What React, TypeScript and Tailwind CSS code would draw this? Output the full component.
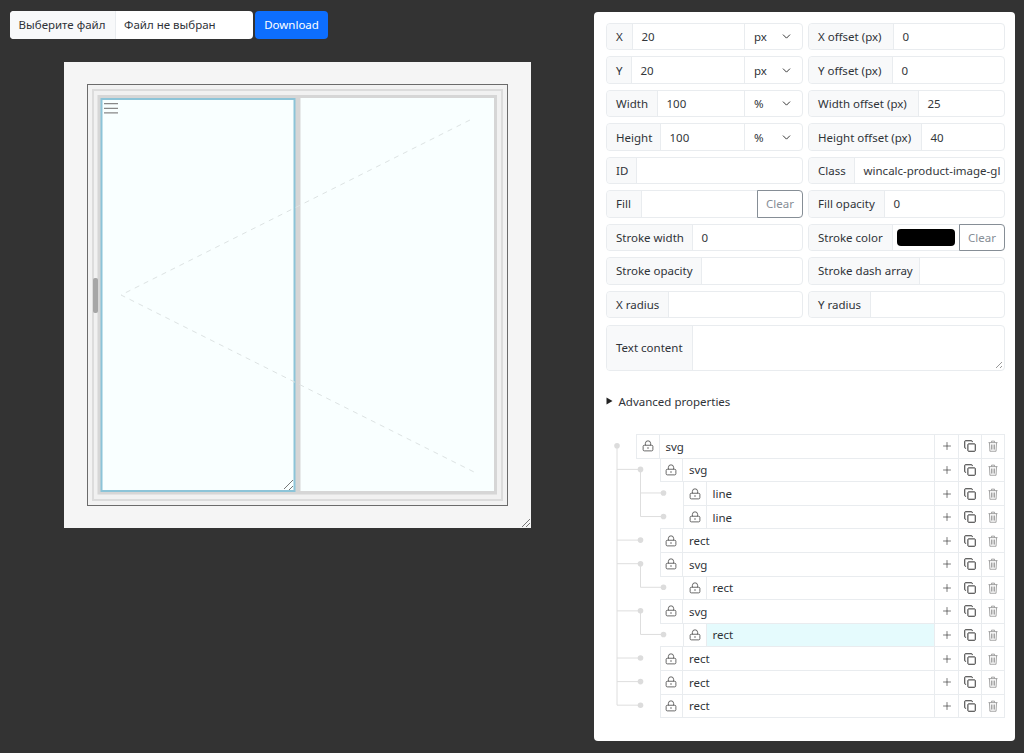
import React from "react";
import { ChevronDown, Plus } from "lucide-react";

function Group({ label, children, lw }: { label: string; children?: React.ReactNode; lw: string }) {
  return (
    <div className="flex h-[27.4px] rounded-[4px] border border-[#e9ecef] text-[11.5px] text-[#2f3338] whitespace-nowrap">
      <div className={`flex items-center justify-start pl-[9px] bg-[#f8f9fa] rounded-l-[4px] border-r border-[#e9ecef] shrink-0 ${lw}`}>{label}</div>
      {children}
    </div>
  );
}

function Value({ v }: { v?: string }) {
  return <div className="flex-1 min-w-0 flex items-center pl-[8.5px] text-[#33373b] overflow-hidden">{v}</div>;
}

function Unit({ u }: { u: string }) {
  return (
    <div className="w-[58px] shrink-0 border-l border-[#e9ecef] flex items-center justify-between pl-[9px] pr-[9px]">
      <span>{u}</span>
      <ChevronDown size={13} strokeWidth={1.8} className="text-[#333]" />
    </div>
  );
}

function ClearBtn() {
  return (
    <div className="w-[46px] shrink-0 -my-px -mr-px border border-[#868e96] rounded-r-[4px] flex items-center justify-center text-[#868e96] bg-white">Clear</div>
  );
}

function Lock() {
  return (
    <svg width="12" height="12" viewBox="0 0 16 16" fill="none" stroke="#4a4a4a" strokeWidth="1.1">
      <rect x="1.5" y="7" width="13" height="7.5" rx="1.6" />
      <path d="M4.5 7V4.6a3.5 3.5 0 0 1 7 0V7" />
      <path d="M7 10.7h2" strokeWidth="1.4" />
    </svg>
  );
}

function CopyIcon() {
  return (
    <svg width="12" height="12" viewBox="0 0 16 16" fill="none" stroke="#2b2b2b" strokeWidth="1.3">
      <rect x="5.2" y="5.2" width="9.8" height="9.8" rx="0.8" />
      <path d="M11 2.8V1.8a.8.8 0 0 0-.8-.8H1.8a.8.8 0 0 0-.8.8v8.4a.8.8 0 0 0 .8.8h1" />
    </svg>
  );
}

function TrashIcon() {
  return (
    <svg width="12" height="12" viewBox="0 0 16 16" fill="none" stroke="#9a9a9a" strokeWidth="1.2">
      <path d="M2 3.5h12M6 3.5V1.5h4v2" />
      <path d="M3.3 3.5l.6 11.5h8.2l.6-11.5" />
      <path d="M6 6v6.8M8 6v6.8M10 6v6.8" />
    </svg>
  );
}

const rows: { name: string; depth: number; active?: boolean }[] = [
  { name: "svg", depth: 0 },
  { name: "svg", depth: 1 },
  { name: "line", depth: 2 },
  { name: "line", depth: 2 },
  { name: "rect", depth: 1 },
  { name: "svg", depth: 1 },
  { name: "rect", depth: 2 },
  { name: "svg", depth: 1 },
  { name: "rect", depth: 2, active: true },
  { name: "rect", depth: 1 },
  { name: "rect", depth: 1 },
  { name: "rect", depth: 1 },
];

const PAD: Record<number, string> = { 0: "pl-[30px]", 1: "pl-[53.5px]", 2: "pl-[77px]" };

function TreeRow({ name, depth, active }: { name: string; depth: number; active?: boolean }) {
  return (
    <div className={`h-[23.58px] ${PAD[depth]}`}>
      <div className="flex h-[24.58px] border-y border-[#e9ecef] text-[11.5px] text-[#2f3338]">
        <div className="w-[23.5px] shrink-0 border-l border-r border-[#e9ecef] flex items-center justify-center bg-white"><Lock /></div>
        <div className={`flex-1 flex items-center pl-[6px] ${active ? "bg-[#e5fbfd]" : "bg-white"}`}>{name}</div>
        {[
          <Plus key="p" size={12} strokeWidth={1.3} className="text-[#333]" />,
          <CopyIcon key="c" />,
          <TrashIcon key="t" />,
        ].map((ic, i) => (
          <div key={i} className="w-[23.6px] shrink-0 border-l border-[#e9ecef] last:border-r flex items-center justify-center bg-white">{ic}</div>
        ))}
      </div>
    </div>
  );
}

function TreeLines() {
  const c = (i: number) => 11.8 + i * 23.58;
  const L = "#dedede";
  const d0 = 11;
  const d1 = 34.5;
  const d2 = 57.5;
  const depth1 = [1, 4, 5, 7, 9, 10, 11];
  const groups: [number, number[]][] = [
    [1, [2, 3]],
    [5, [6]],
    [7, [8]],
  ];
  return (
    <svg className="absolute left-0 top-0 pointer-events-none" width="80" height="284" fill="none">
      <path d={`M${d0} ${c(0)}V${c(11)}`} stroke={L} />
      {depth1.map((i) => (
        <path key={i} d={`M${d0} ${c(i)}H${d1}`} stroke={L} />
      ))}
      {groups.map(([p, kids]) => (
        <g key={p}>
          <path d={`M${d1} ${c(p)}V${c(kids[kids.length - 1])}`} stroke={L} />
          {kids.map((k) => (
            <path key={k} d={`M${d1} ${c(k)}H${d2}`} stroke={L} />
          ))}
        </g>
      ))}
      <circle cx={d0} cy={c(0)} r="2.8" fill="#dcdcdc" />
      {depth1.map((i) => <circle key={i} cx={d1} cy={c(i)} r="2.8" fill="#dcdcdc" />)}
      {groups.flatMap(([, kids]) => kids).map((k) => <circle key={k} cx={d2} cy={c(k)} r="2.8" fill="#dcdcdc" />)}
    </svg>
  );
}

function Preview() {
  return (
    <svg width="467" height="466" viewBox="0 0 467 466" className="block">
      <rect x="0" y="0" width="467" height="466" fill="#f5f5f5" />
      <rect x="23.5" y="22.5" width="420" height="421" fill="#f2f2f2" stroke="#6b6b6b" />
      <rect x="29" y="28" width="409" height="410" fill="#f1f1f1" stroke="#dcdcdc" strokeWidth="2" />
      <rect x="33.5" y="33" width="399.5" height="399.5" fill="#d6d6d6" />
      <rect x="236.5" y="36" width="193.5" height="393" fill="#f9ffff" />
      <rect x="37.5" y="37" width="193" height="392" fill="#f9ffff" stroke="#8cc4d8" strokeWidth="2" />
      <path d="M406 58L57 233L410 410" fill="none" stroke="#dde3e3" strokeDasharray="5 5" />
      <path d="M40 41.7h14M40 46.3h14M40 50.8h14" stroke="#888" strokeWidth="1.3" />
      <rect x="29" y="216" width="5" height="35" rx="2" fill="#a6a6a6" />
      <path d="M220 427l9-9M225 428l4-4" stroke="#777" />
      <path d="M458 465l8-8M462 465l4-4" stroke="#777" />
    </svg>
  );
}

export default function App() {
  return (
    <div
      className="flex w-[1024px] h-[753px] bg-[#333333] overflow-hidden"
      style={{ fontFamily: '"Noto Sans", "Noto Sans CJK SC", sans-serif' }}
    >
      <div className="w-[594px] shrink-0 flex flex-col pl-[9.5px] pt-[11px]">
        <div className="flex gap-[2.5px] h-[27.5px] text-[11.5px] whitespace-nowrap">
          <div className="flex w-[243px] rounded-[4px] bg-white overflow-hidden text-[#2f3338]">
            <div className="w-[106px] bg-[#f8f9fa] border-r border-[#e9ecef] flex items-center justify-center">Выберите файл</div>
            <div className="flex-1 flex items-center pl-[8.5px]">Файл не выбран</div>
          </div>
          <div className="w-[73px] rounded-[4px] bg-[#0d6efd] text-white flex items-center justify-center">Download</div>
        </div>
        <div className="mt-[23.5px] ml-[54.5px]">
          <Preview />
        </div>
      </div>

      <div className="mt-[12px] w-[421px] h-[729px] bg-white rounded-[4px] pl-[12px] pr-[10px] pt-[11px]">
        <div className="grid grid-cols-[197px_197px] gap-x-[5px] gap-y-[6.1px]">
          <Group label="X" lw="w-[26px]"><Value v="20" /><Unit u="px" /></Group>
          <Group label="X offset (px)" lw="w-[85px]"><Value v="0" /></Group>
          <Group label="Y" lw="w-[25px]"><Value v="20" /><Unit u="px" /></Group>
          <Group label="Y offset (px)" lw="w-[84px]"><Value v="0" /></Group>
          <Group label="Width" lw="w-[51px]"><Value v="100" /><Unit u="%" /></Group>
          <Group label="Width offset (px)" lw="w-[110px]"><Value v="25" /></Group>
          <Group label="Height" lw="w-[54px]"><Value v="100" /><Unit u="%" /></Group>
          <Group label="Height offset (px)" lw="w-[113px]"><Value v="40" /></Group>
          <Group label="ID" lw="w-[30px]"><Value /></Group>
          <Group label="Class" lw="w-[46px]"><Value v="wincalc-product-image-gl" /></Group>
          <Group label="Fill" lw="w-[35px]"><Value /><ClearBtn /></Group>
          <Group label="Fill opacity" lw="w-[76px]"><Value v="0" /></Group>
          <Group label="Stroke width" lw="w-[86px]"><Value v="0" /></Group>
          <Group label="Stroke color" lw="w-[84px]">
            <div className="flex-1 flex items-center pl-[4px] pr-[4px]"><div className="w-full h-[17px] bg-black rounded-[4px]" /></div>
            <ClearBtn />
          </Group>
          <Group label="Stroke opacity" lw="w-[94.5px]"><Value /></Group>
          <Group label="Stroke dash array" lw="w-[110.5px]"><Value /></Group>
          <Group label="X radius" lw="w-[61.5px]"><Value /></Group>
          <Group label="Y radius" lw="w-[61.5px]"><Value /></Group>
          <div className="col-span-2 mt-[1px] h-[45.5px] flex rounded-[4px] border border-[#e9ecef] overflow-hidden text-[11.5px] text-[#2f3338] relative">
            <div className="w-[86px] bg-[#f8f9fa] border-r border-[#e9ecef] flex items-center pl-[9px]">Text content</div>
            <svg className="absolute right-[1px] bottom-[1px]" width="8" height="8"><path d="M1 7l6-6M5 7l2-2" stroke="#999" /></svg>
          </div>
        </div>
        <div className="mt-[22.5px] h-[16px] flex items-center gap-[5.5px] text-[11.5px] text-[#2f3338]">
          <svg width="7" height="8"><path d="M0.5 0.5L6.5 4L0.5 7.5Z" fill="#222" /></svg>
          <span>Advanced properties</span>
        </div>
        <div className="relative mt-[24.8px]">
          {rows.map((r, i) => <TreeRow key={i} {...r} />)}
          <TreeLines />
        </div>
      </div>
    </div>
  );
}
